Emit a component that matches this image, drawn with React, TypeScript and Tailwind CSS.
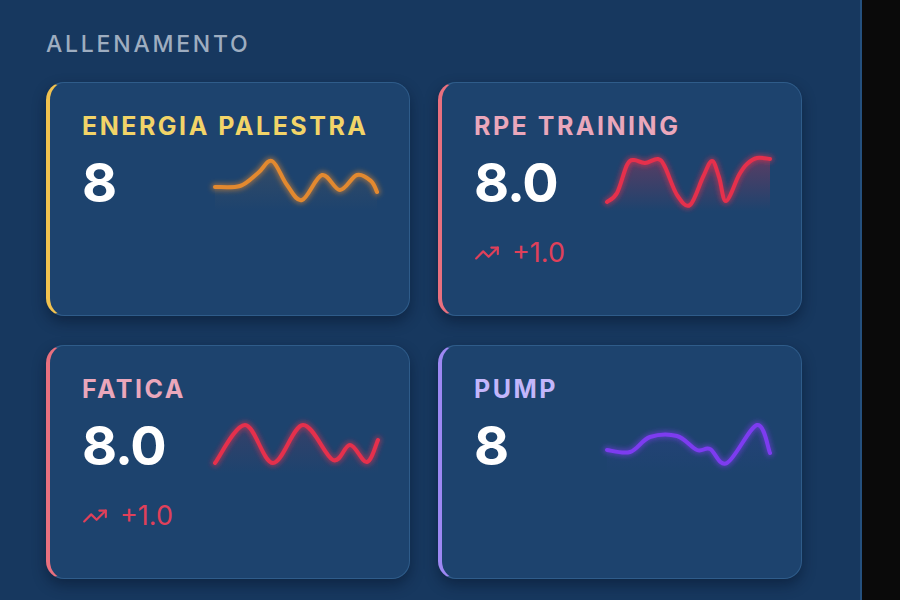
import React from "react";
import { TrendingUp } from "lucide-react";

type Pt = [number, number];

function smoothPath(pts: Pt[]): string {
  if (pts.length < 2) return "";
  let d = `M${pts[0][0]},${pts[0][1]}`;
  for (let i = 0; i < pts.length - 1; i++) {
    const p0 = pts[i - 1] || pts[i];
    const p1 = pts[i];
    const p2 = pts[i + 1];
    const p3 = pts[i + 2] || p2;
    const t = 0.17;
    const c1x = p1[0] + (p2[0] - p0[0]) * t;
    const c1y = p1[1] + (p2[1] - p0[1]) * t;
    const c2x = p2[0] - (p3[0] - p1[0]) * t;
    const c2y = p2[1] - (p3[1] - p1[1]) * t;
    d += ` C${c1x.toFixed(1)},${c1y.toFixed(1)} ${c2x.toFixed(1)},${c2y.toFixed(1)} ${p2[0]},${p2[1]}`;
  }
  return d;
}

type Metric = {
  title: string;
  value: string;
  delta?: string;
  accent: string;
  titleClass: string;
  stroke: string;
  glow: string;
  fill: number;
  points: Pt[];
  id: string;
};

const metrics: Metric[] = [
  {
    id: "a",
    title: "ENERGIA PALESTRA",
    value: "8",
    accent: "border-l-[#f1c24f]",
    titleClass: "text-[#f2d468]",
    stroke: "#e3892f",
    glow: "rgba(227,137,47,0.55)",
    fill: 0.12,
    points: [
      [2, 32], [27, 31], [45, 18], [59, 6], [74, 30], [89, 45], [109, 20], [127, 35], [144, 20], [158, 26], [164, 37],
    ],
  },
  {
    id: "b",
    title: "RPE TRAINING",
    value: "8.0",
    delta: "+1.0",
    accent: "border-l-[#e8707f]",
    titleClass: "text-[#eaa7bb]",
    stroke: "#e5304c",
    glow: "rgba(229,48,76,0.55)",
    fill: 0.3,
    points: [
      [2, 47], [12, 38], [22, 10], [29, 5], [40, 8], [53, 4], [60, 12], [72, 40], [85, 50], [98, 22], [107, 6], [114, 22], [121, 46], [134, 20], [142, 9], [152, 3], [165, 4],
    ],
  },
  {
    id: "c",
    title: "FATICA",
    value: "8.0",
    delta: "+1.0",
    accent: "border-l-[#e8707f]",
    titleClass: "text-[#eaa7bb]",
    stroke: "#e5304c",
    glow: "rgba(229,48,76,0.55)",
    fill: 0.12,
    points: [
      [2, 45], [32, 7], [60, 45], [90, 7], [120, 42], [137, 27], [154, 44], [165, 22],
    ],
  },
  {
    id: "d",
    title: "PUMP",
    value: "8",
    accent: "border-l-[#9d88f3]",
    titleClass: "text-[#c3b6fb]",
    stroke: "#7d3cf0",
    glow: "rgba(125,60,240,0.55)",
    fill: 0.08,
    points: [
      [2, 32], [25, 34], [45, 19], [72, 18], [92, 32], [105, 31], [122, 45], [152, 7], [165, 35],
    ],
  },
];

function Sparkline({ m }: { m: Metric }) {
  const d = smoothPath(m.points);
  const last = m.points[m.points.length - 1];
  const first = m.points[0];
  const area = `${d} L${last[0]},56 L${first[0]},56 Z`;
  return (
    <svg width="167" height="56" viewBox="0 0 167 56" className="shrink-0 overflow-visible">
      <defs>
        <linearGradient id={`g-${m.id}`} x1="0" y1="0" x2="0" y2="1">
          <stop offset="0%" stopColor={m.stroke} stopOpacity={m.fill} />
          <stop offset="100%" stopColor={m.stroke} stopOpacity="0" />
        </linearGradient>
        <filter id={`f-${m.id}`} x="-20%" y="-40%" width="140%" height="180%">
          <feGaussianBlur stdDeviation="2.5" />
        </filter>
      </defs>
      <path d={area} fill={`url(#g-${m.id})`} />
      <path d={d} fill="none" stroke={m.glow} strokeWidth="7" strokeLinecap="round" strokeLinejoin="round" filter={`url(#f-${m.id})`} />
      <path d={d} fill="none" stroke={m.stroke} strokeWidth="4" strokeLinecap="round" strokeLinejoin="round" />
    </svg>
  );
}

function Card({ m }: { m: Metric }) {
  return (
    <div
      className={`h-[234px] rounded-[18px] border border-[#2f5c8a] border-l-4 ${m.accent} bg-[#1d436e] pl-8 pr-[29px] pt-[28px] shadow-[0_6px_14px_rgba(5,15,35,0.45)]`}
    >
      <div className={`text-[25px] leading-[30px] font-bold tracking-[0.1em] whitespace-nowrap ${m.titleClass}`}>{m.title}</div>
      <div className="mt-[12px] flex h-[60px] items-center justify-between">
        <div className="text-[54px] leading-[60px] font-bold tracking-[-0.02em] text-white">{m.value}</div>
        <Sparkline m={m} />
      </div>
      {m.delta && (
        <div className="mt-[25px] flex h-[30px] items-center gap-[12px] text-[#e0405a]">
          <TrendingUp size={26} strokeWidth={2} />
          <span className="text-[27px] leading-[30px] font-normal">{m.delta}</span>
        </div>
      )}
    </div>
  );
}

export default function App() {
  return (
    <div
      className="flex h-[600px] w-[900px] bg-[#0a0a0a]"
      style={{ fontFamily: "Inter, 'Noto Sans', sans-serif" }}
    >
      <div className="h-full w-[862px] border-r-2 border-r-[#24507e] bg-[#17385f] pl-[46px] pr-[58px] pt-[30px]">
        <div className="text-[23px] leading-[28px] font-medium tracking-[0.12em] text-[#9eadc0]">ALLENAMENTO</div>
        <div className="mt-[24px] grid grid-cols-2 gap-x-[28px] gap-y-[29px]">
          {metrics.map((m) => (
            <Card key={m.id} m={m} />
          ))}
        </div>
      </div>
    </div>
  );
}
